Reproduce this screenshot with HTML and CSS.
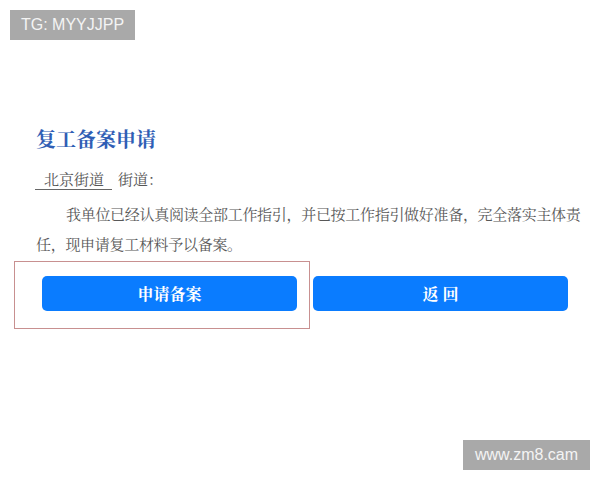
FILE: index.html
```html
<!DOCTYPE html>
<html lang="zh-CN">
<head>
<meta charset="utf-8">
<title>复工备案申请</title>
<link rel="stylesheet" href="styles.css">
</head>
<body>
<div class="page">
  <div class="wm wm-tg">TG: MYYJJPP</div>
  <main class="content">
    <h1 class="title">复工备案申请</h1>
    <div class="street"><span class="street-name">北京街道</span><span class="street-label">街道：</span></div>
    <p class="statement">我单位已经认真阅读全部工作指引，并已按工作指引做好准备，完全落实主体责任，现申请复工材料予以备案。</p>
    <div class="actions">
      <button class="btn">申请备案</button>
      <button class="btn">返 回</button>
    </div>
  </main>
  <div class="annot"></div>
  <div class="wm wm-site">www.zm8.cam</div>
</div>
</body>
</html>
```
FILE: styles.css
```css
html, body {
  margin: 0;
  padding: 0;
  background: #ffffff;
}
.page {
  position: relative;
  width: 600px;
  height: 480px;
  overflow: hidden;
  font-family: "Noto Serif CJK SC", "Noto Sans CJK SC", serif;
}
.wm {
  position: absolute;
  background: #a9a9a9;
  color: #f4f4f4;
  font-family: "Liberation Sans", Arial, sans-serif;
  font-size: 16px;
  line-height: 30px;
  height: 30px;
  box-sizing: border-box;
  text-align: center;
}
.wm-tg {
  left: 10px;
  top: 10px;
  width: 125px;
}
.wm-site {
  left: 463px;
  top: 440px;
  width: 127px;
}
.content {
  padding: 126px 0 0 36px;
  width: 552px;
}
.title {
  margin: 0;
  font-size: 20px;
  line-height: 26px;
  font-weight: bold;
  color: #2f5eb5;
}
.street {
  margin-top: 17px;
  font-size: 15px;
  line-height: 20px;
  color: #555555;
  display: flex;
}
.street-name {
  display: inline-block;
  width: 77px;
  padding-left: 9px;
  box-sizing: border-box;
  border-bottom: 1px solid #666666;
  margin-left: -1px;
}
.street-label {
  margin-left: 6px;
}
.statement {
  margin: 9px 0 0;
  font-size: 15px;
  line-height: 30px;
  letter-spacing: -0.3px;
  text-indent: 2em;
  color: #585858;
}
.actions {
  display: flex;
  gap: 16px;
  margin: 17px 0 0 6px;
}
.btn {
  width: 255px;
  height: 35px;
  border: none;
  border-radius: 5px;
  background: #0a7cff;
  color: #ffffff;
  font-family: "Noto Serif CJK SC", "Noto Sans CJK SC", serif;
  font-size: 16px;
  font-weight: bold;
  padding: 0;
}
.annot {
  position: absolute;
  left: 14px;
  top: 261px;
  width: 296px;
  height: 68px;
  border: 1px solid #c89090;
  box-sizing: border-box;
}
```
